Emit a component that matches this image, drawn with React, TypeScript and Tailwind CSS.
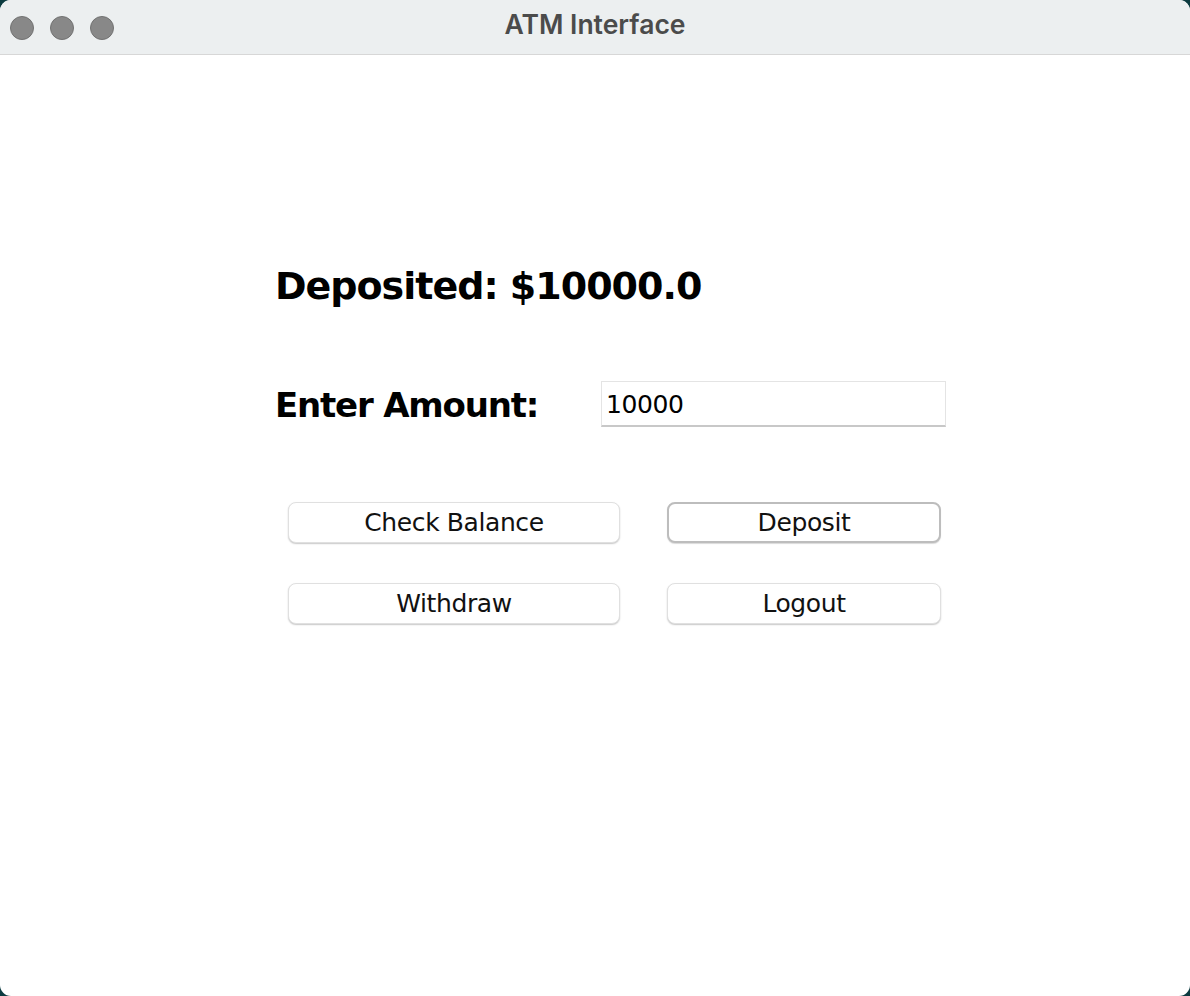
import { useState } from 'react';

const bodyFont = { fontFamily: '"DejaVu Sans", "Liberation Sans", sans-serif' };

function TrafficLight() {
  return <span className="block h-[24px] w-[24px] rounded-full bg-[#888888] border border-[#727272]" />;
}

function AtmButton({ label, focused }: { label: string; focused?: boolean }) {
  return (
    <button
      className={
        'h-[41px] rounded-[8px] bg-white text-[25px] leading-none tracking-[-0.4px] text-[#111] ' +
        (focused
          ? 'border-2 border-[#bdbdbd] shadow-[0_1px_1px_rgba(0,0,0,0.15)]'
          : 'border border-[#e0e0e0] shadow-[0_1px_1.5px_rgba(0,0,0,0.22)]')
      }
      style={bodyFont}
    >
      {label}
    </button>
  );
}

export default function App() {
  const [amount, setAmount] = useState('10000');

  return (
    <div className="w-[1190px] h-[996px] bg-[#0c3b40]">
      <div className="flex h-full flex-col overflow-hidden rounded-[11px] bg-white">
        {/* title bar */}
        <div className="relative flex h-[55px] shrink-0 items-center border-b border-[#d7d7d7] bg-[#eceff0] px-[10px]">
          <div className="flex gap-[16px] pt-[1px]">
            <TrafficLight />
            <TrafficLight />
            <TrafficLight />
          </div>
          <div
            className="absolute inset-x-0 top-0 flex h-[50px] items-center justify-center text-[26.5px] font-semibold text-[#4b4b4b]"
            style={{ fontFamily: 'Inter, "Liberation Sans", sans-serif' }}
          >
            ATM Interface
          </div>
        </div>

        {/* content */}
        <div className="flex flex-col pl-[275px] pt-[201px] text-black" style={bodyFont}>
          <div className="h-[60px] text-[38px] font-bold leading-[60px] tracking-[-1px]">Deposited: $10000.0</div>

          <div className="mt-[65px] flex items-center">
            <label htmlFor="amount" className="w-[326px] pt-[2px] text-[34px] font-bold leading-none tracking-[-1.2px]">
              Enter Amount:
            </label>
            <input
              id="amount"
              value={amount}
              onChange={(e) => setAmount(e.target.value)}
              className="h-[46px] w-[345px] border border-[#e4e4e4] border-b-2 border-b-[#c8c8c8] bg-white px-[4px] pt-[2px] text-[25px] tracking-[-0.4px] text-black outline-none"
              style={bodyFont}
            />
          </div>

          <div className="mt-[75px] ml-[13px] grid w-[653px] grid-cols-[332px_274px] gap-x-[47px] gap-y-[40px]">
            <AtmButton label="Check Balance" />
            <AtmButton label="Deposit" focused />
            <AtmButton label="Withdraw" />
            <AtmButton label="Logout" />
          </div>
        </div>
      </div>
    </div>
  );
}
